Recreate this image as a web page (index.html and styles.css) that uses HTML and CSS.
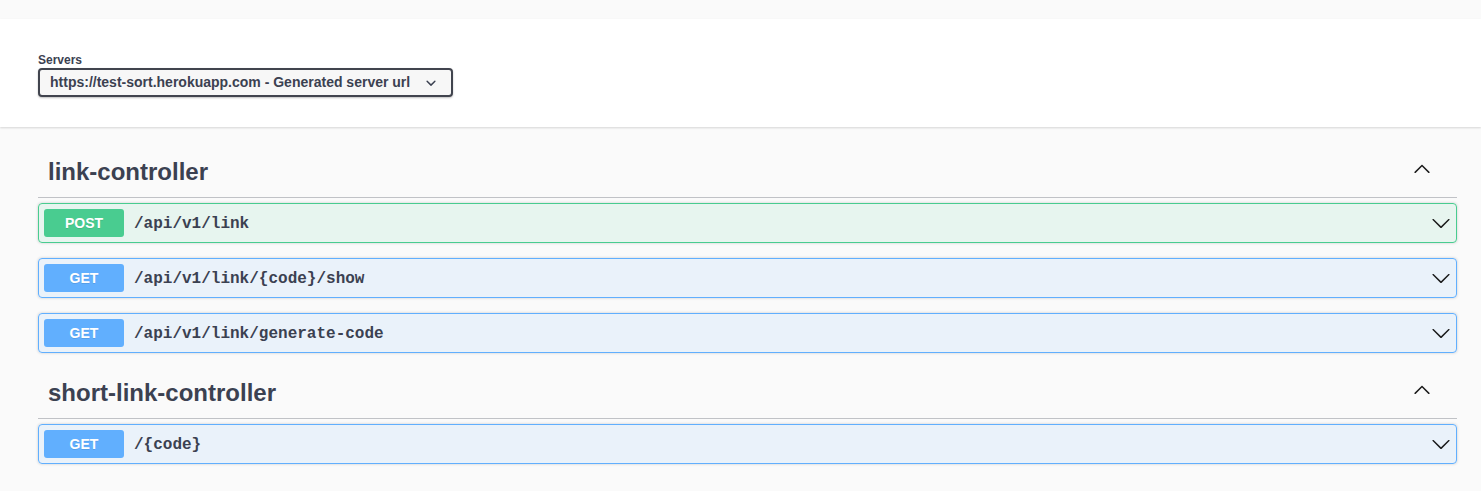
FILE: index.html
```html
<!DOCTYPE html>
<html lang="en">
<head>
<meta charset="utf-8">
<title>Swagger UI</title>
<link rel="stylesheet" href="styles.css">
</head>
<body>
<div class="top-strip"></div>
<section class="scheme-container">
  <div class="wrapper">
    <div class="servers-title">Servers</div>
    <div class="select">
      <span class="select-text">https://test-sort.herokuapp.com - Generated server url</span>
      <svg class="select-arrow" width="20" height="20" viewBox="0 0 20 20"><path d="M13.418 7.859a.695.695 0 0 1 .978 0 .68.68 0 0 1 0 .969l-3.908 3.83a.697.697 0 0 1-.979 0l-3.908-3.83a.68.68 0 0 1 0-.969.695.695 0 0 1 .978 0L10 11l3.418-3.141z"/></svg>
    </div>
  </div>
</section>
<main class="wrapper">
  <section class="tag-section">
    <h3 class="opblock-tag">
      <span class="tag-name">link-controller</span>
      <svg class="arrow tag-arrow" width="20" height="20" viewBox="0 0 20 20"><path d="M17.418 14.908c-.287.287-.753.287-1.041 0L10 8.533l-6.377 6.375c-.287.287-.753.287-1.041 0-.287-.287-.287-.753 0-1.041l6.898-6.896c.287-.287.753-.287 1.041 0l6.897 6.896c.288.288.288.754 0 1.041z"/></svg>
    </h3>
    <div class="opblock post">
      <span class="method">POST</span>
      <span class="path">/api/v1/link</span>
      <svg class="arrow" width="20" height="20" viewBox="0 0 20 20"><path d="M17.418 6.109c.272-.268.709-.268.979 0s.271.701 0 .969l-7.908 7.83c-.27.268-.707.268-.979 0l-7.908-7.83c-.27-.268-.27-.701 0-.969.271-.268.709-.268.979 0L10 13.25l7.418-7.141z"/></svg>
    </div>
    <div class="opblock get">
      <span class="method">GET</span>
      <span class="path">/api/v1/link/{code}/show</span>
      <svg class="arrow" width="20" height="20" viewBox="0 0 20 20"><path d="M17.418 6.109c.272-.268.709-.268.979 0s.271.701 0 .969l-7.908 7.83c-.27.268-.707.268-.979 0l-7.908-7.83c-.27-.268-.27-.701 0-.969.271-.268.709-.268.979 0L10 13.25l7.418-7.141z"/></svg>
    </div>
    <div class="opblock get">
      <span class="method">GET</span>
      <span class="path">/api/v1/link/generate-code</span>
      <svg class="arrow" width="20" height="20" viewBox="0 0 20 20"><path d="M17.418 6.109c.272-.268.709-.268.979 0s.271.701 0 .969l-7.908 7.83c-.27.268-.707.268-.979 0l-7.908-7.83c-.27-.268-.27-.701 0-.969.271-.268.709-.268.979 0L10 13.25l7.418-7.141z"/></svg>
    </div>
  </section>
  <section class="tag-section">
    <h3 class="opblock-tag">
      <span class="tag-name">short-link-controller</span>
      <svg class="arrow tag-arrow" width="20" height="20" viewBox="0 0 20 20"><path d="M17.418 14.908c-.287.287-.753.287-1.041 0L10 8.533l-6.377 6.375c-.287.287-.753.287-1.041 0-.287-.287-.287-.753 0-1.041l6.898-6.896c.287-.287.753-.287 1.041 0l6.897 6.896c.288.288.288.754 0 1.041z"/></svg>
    </h3>
    <div class="opblock get">
      <span class="method">GET</span>
      <span class="path">/{code}</span>
      <svg class="arrow" width="20" height="20" viewBox="0 0 20 20"><path d="M17.418 6.109c.272-.268.709-.268.979 0s.271.701 0 .969l-7.908 7.83c-.27.268-.707.268-.979 0l-7.908-7.83c-.27-.268-.27-.701 0-.969.271-.268.709-.268.979 0L10 13.25l7.418-7.141z"/></svg>
    </div>
  </section>
</main>
</body>
</html>
```

FILE: styles.css
```css
* { box-sizing: border-box; }
html, body {
  margin: 0;
  padding: 0;
  background: #fafafa;
  font-family: "Liberation Sans", Arial, sans-serif;
  color: #3b4151;
}
.top-strip {
  height: 19px;
  background: #fafafa;
}
.wrapper {
  padding: 0 24px 0 38px;
}
.scheme-container {
  background: #fff;
  box-shadow: 0 1px 2px 0 rgba(0, 0, 0, 0.15);
  padding: 30px 0;
  margin: 0 0 20px;
}
.servers-title {
  font-size: 12px;
  font-weight: 700;
  line-height: 14px;
  padding-top: 4px;
  margin-bottom: 1px;
}
.select {
  display: inline-flex;
  align-items: center;
  height: 29px;
  padding: 0 0 0 10px;
  border: 2px solid #41444e;
  border-radius: 4px;
  background: #f7f7f7;
  box-shadow: 0 1px 2px 0 rgba(0, 0, 0, 0.25);
  font-size: 14px;
  font-weight: 700;
  line-height: 15px;
  color: #3b4151;
}
.select-text { white-space: nowrap; }
.select-arrow {
  display: block;
  flex: none;
  margin: 0 10px 0 11px;
  fill: #3b4151;
}
.tag-section { margin: 0; }
.opblock-tag {
  display: flex;
  align-items: center;
  margin: 0 0 5px;
  padding: 10px 25px 10px 10px;
  border-bottom: 1px solid rgba(59, 65, 81, 0.3);
  font-size: 24px;
  font-weight: 700;
  line-height: 30px;
  color: #3b4151;
}
.tag-name { flex: 1; }
.arrow { display: block; flex: none; fill: #1a1a1a; }
.tag-arrow { margin-top: -9px; }
.opblock {
  display: flex;
  align-items: center;
  margin: 0 0 15px;
  padding: 5px;
  border: 1px solid;
  border-radius: 4px;
  box-shadow: 0 0 3px rgba(0, 0, 0, 0.19);
}
.opblock.post {
  border-color: #49cc90;
  background: rgba(73, 204, 144, 0.1);
}
.opblock.get {
  border-color: #61affe;
  background: rgba(97, 175, 254, 0.1);
}
.method {
  flex: none;
  min-width: 80px;
  height: 28px;
  line-height: 28px;
  border-radius: 3px;
  text-align: center;
  font-size: 14px;
  font-weight: 700;
  color: #fff;
  text-shadow: 0 1px 0 rgba(0, 0, 0, 0.1);
}
.post .method { background: #49cc90; }
.get .method { background: #61affe; }
.path {
  flex: 1;
  padding: 0 10px;
  font-family: "Liberation Mono", "Courier New", monospace;
  font-size: 16px;
  font-weight: 700;
  line-height: 20px;
  padding-top: 1px;
  color: #3b4151;
}
```
